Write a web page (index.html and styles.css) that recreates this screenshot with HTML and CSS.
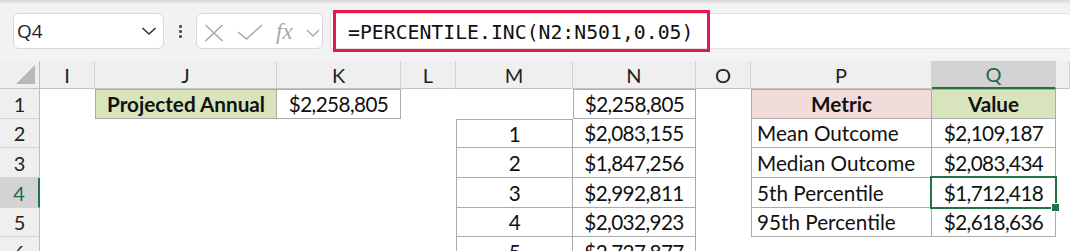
FILE: index.html
```html
<!DOCTYPE html>
<html lang="en">
<head>
    <meta charset="UTF-8">
    <title>Monte Carlo summary</title>
    <link rel="stylesheet" href="styles.css">
</head>
<body>
<!-- formula bar -->
<div class="toolbar">
    <div class="namebox">
        <span>Q4</span>
        <svg width="16" height="10" viewBox="0 0 16 10"><path d="M1.5 2 L8 8 L14.5 2" fill="none" stroke="#333" stroke-width="1.6"/></svg>
    </div>
    <div class="grip"><i></i><i></i><i></i></div>
    <div class="fxbox">
        <svg width="125" height="34" viewBox="0 0 125 34">
            <path d="M8.5 11 L25.5 27 M25.5 11 L8.5 27" stroke="#a8a8a8" stroke-width="1.5" fill="none"/>
            <path d="M41 18 L49.5 25 L65 11" stroke="#a8a8a8" stroke-width="1.5" fill="none"/>
            <text x="79" y="25" class="fx">fx</text>
            <path d="M110 16 L116 22 L122 16" stroke="#a8a8a8" stroke-width="1.4" fill="none"/>
        </svg>
    </div>
    <div class="formula"><span>=PERCENTILE.INC(N2:N501,0.05)</span></div>
    <div class="callout"></div>
</div>

<!-- sheet -->
<div class="sheet">
    <div class="hd corner"></div>
    <div class="hd">I</div>
    <div class="hd">J</div>
    <div class="hd">K</div>
    <div class="hd">L</div>
    <div class="hd">M</div>
    <div class="hd">N</div>
    <div class="hd">O</div>
    <div class="hd">P</div>
    <div class="hd sel-col">Q</div>
    <div class="hd"></div>

    <div class="rh">1</div>
    <div class="c"></div>
    <div class="c b bl bt green bold">Projected Annual</div>
    <div class="c b bt num">$2,258,805</div>
    <div class="c"></div>
    <div class="c"></div>
    <div class="c b bl bt num">$2,258,805</div>
    <div class="c"></div>
    <div class="c b bl bt pink bold">Metric</div>
    <div class="c b bt green bold">Value</div>
    <div class="c"></div>

    <div class="rh">2</div>
    <div class="c"></div>
    <div class="c"></div>
    <div class="c"></div>
    <div class="c"></div>
    <div class="c b bl bt num">1</div>
    <div class="c b num">$2,083,155</div>
    <div class="c"></div>
    <div class="c b bl left">Mean Outcome</div>
    <div class="c b num">$2,109,187</div>
    <div class="c"></div>

    <div class="rh">3</div>
    <div class="c"></div>
    <div class="c"></div>
    <div class="c"></div>
    <div class="c"></div>
    <div class="c b bl num">2</div>
    <div class="c b num">$1,847,256</div>
    <div class="c"></div>
    <div class="c b bl left">Median Outcome</div>
    <div class="c b num">$2,083,434</div>
    <div class="c"></div>

    <div class="rh sel-row">4</div>
    <div class="c"></div>
    <div class="c"></div>
    <div class="c"></div>
    <div class="c"></div>
    <div class="c b bl num">3</div>
    <div class="c b num">$2,992,811</div>
    <div class="c"></div>
    <div class="c b bl left">5th Percentile</div>
    <div class="c b num active">$1,712,418</div>
    <div class="c"></div>

    <div class="rh">5</div>
    <div class="c"></div>
    <div class="c"></div>
    <div class="c"></div>
    <div class="c"></div>
    <div class="c b bl num">4</div>
    <div class="c b num">$2,032,923</div>
    <div class="c"></div>
    <div class="c b bl left">95th Percentile</div>
    <div class="c b num">$2,618,636</div>
    <div class="c"></div>

    <div class="rh">6</div>
    <div class="c"></div>
    <div class="c"></div>
    <div class="c"></div>
    <div class="c"></div>
    <div class="c b bl num">5</div>
    <div class="c b num">$2,727,877</div>
    <div class="c"></div>
    <div class="c"></div>
    <div class="c"></div>
    <div class="c"></div>
</div>
</body>
</html>
```

FILE: styles.css
```css
* {
    margin: 0;
    padding: 0;
    box-sizing: border-box;
}

body {
    width: 1070px;
    height: 251px;
    overflow: hidden;
    background-color: #fff;
    font-family: Lato, "Liberation Sans", sans-serif;
    color: #111;
}

/* formula bar */
.toolbar {
    position: relative;
    height: 61px;
    padding-top: 13px;
    display: flex;
    align-items: flex-start;
    background: linear-gradient(#d6d6d6, #f2f2f2 4px, #f3f3f3);
}

.namebox {
    margin-left: 13px;
    width: 151px;
    height: 36px;
    padding: 0 6px 0 3px;
    display: flex;
    align-items: center;
    justify-content: space-between;
    background-color: #fff;
    border: 1px solid #d8d8d8;
    border-radius: 6px;
    font-family: "Open Sans", "Noto Sans", sans-serif;
    font-size: 19px;
    color: #222;
}

.grip {
    width: 32px;
    padding-top: 12px;
    display: flex;
    flex-direction: column;
    align-items: center;
    gap: 2px;
}

.grip i {
    width: 3px;
    height: 3px;
    border-radius: 1px;
    background-color: #555;
}

.fxbox {
    width: 127px;
    height: 36px;
    background-color: #fff;
    border: 1px solid #d8d8d8;
    border-radius: 6px;
}

.fxbox svg {
    display: block;
}

.fx {
    font-family: "Liberation Serif", "DejaVu Serif", serif;
    font-style: italic;
    font-size: 23px;
    fill: #a8a8a8;
}

.formula {
    margin-left: 7px;
    flex: 1;
    height: 36px;
    padding: 7px 0 0 17px;
    background-color: #fff;
    border: 1px solid #e2e2e2;
    border-right: 0;
    font-family: "DejaVu Sans Mono", "Liberation Mono", monospace;
    font-size: 19.8px;
    line-height: 24px;
    color: #111;
}

.callout {
    position: absolute;
    left: 333px;
    top: 10px;
    width: 377px;
    height: 42px;
    border: 3px solid #e01a4b;
}

/* sheet */
.sheet {
    display: grid;
    grid-template-columns: 40px 55px 182px 124px 55px 117px 123px 55px 181px 124px 14px;
    grid-template-rows: 28px 30px 29px 30px 30px 29px 30px;
    font-size: 20.7px;
}

.sheet > div {
    display: flex;
    align-items: center;
    justify-content: center;
    white-space: nowrap;
}

.hd {
    background-color: #efefef;
    border-right: 1px solid #d4d4d4;
    border-bottom: 1px solid #c4c4c4;
    color: #222;
    font-size: 20px;
}

.corner {
    position: relative;
    border-right-color: #c0c0c0;
}

.corner::after {
    content: "";
    position: absolute;
    right: 4px;
    bottom: 4px;
    border-style: solid;
    border-width: 0 0 19px 19px;
    border-color: transparent transparent #b8b8b8 transparent;
}

.rh {
    background-color: #efefef;
    border-right: 1px solid #c0c0c0;
    border-bottom: 1px solid #d4d4d4;
    color: #222;
    font-size: 20px;
}

.sel-col {
    background-color: #d3d3d3 !important;
    border-bottom: 2px solid #217346 !important;
    color: #1c6b3f !important;
}

.sel-row {
    background-color: #d3d3d3 !important;
    border-right: 2px solid #217346 !important;
    color: #1c6b3f !important;
}

.c.b {
    border-right: 1px solid #acacac;
    border-bottom: 1px solid #acacac;
}

.c.bl {
    border-left: 1px solid #acacac;
}

.c.bt {
    border-top: 1px solid #acacac;
}

.bold {
    font-weight: bold;
}

.num {
    letter-spacing: -0.6px;
}

.sheet > .left {
    justify-content: flex-start;
    padding-left: 5px;
}

.green {
    background-color: #d8e4bc;
}

.pink {
    background-color: #f2dcdb;
}

.active {
    position: relative;
}

.active::before {
    content: "";
    position: absolute;
    left: -2px;
    top: -2px;
    right: -2px;
    bottom: -2px;
    border: 2px solid #217346;
}

.active::after {
    content: "";
    position: absolute;
    right: -5px;
    bottom: -5px;
    width: 7px;
    height: 7px;
    background-color: #217346;
    border: 1px solid #fff;
}
```
